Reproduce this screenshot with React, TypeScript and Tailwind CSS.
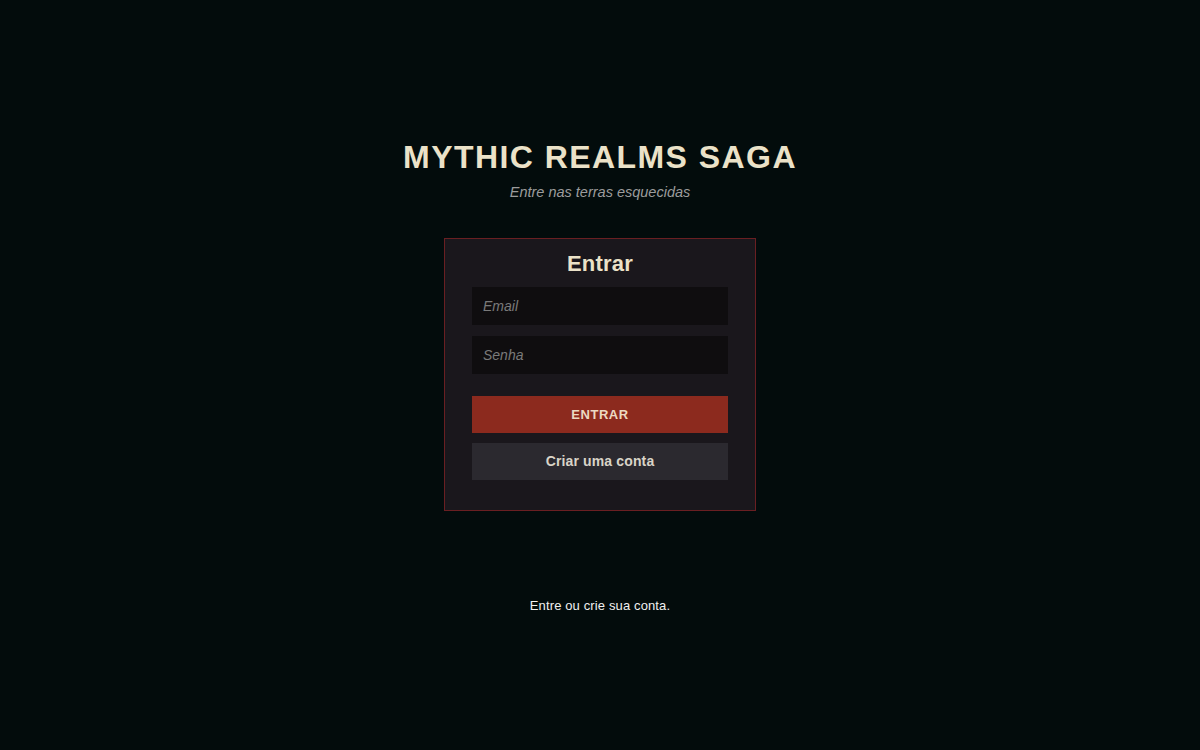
export default function App() {
  return (
    <main
      className="flex min-h-screen flex-col items-center bg-[#030c0c] pt-[136px]"
      style={{ fontFamily: '"Liberation Sans", Arial, sans-serif' }}
    >
      <h1 className="text-[32px] font-bold leading-[42px] tracking-[0.045em] text-[#ebe2c8]">
        MYTHIC REALMS SAGA
      </h1>
      <p className="mt-[4px] text-[14.5px] italic leading-[20px] text-[#9c9c9c]">
        Entre nas terras esquecidas
      </p>

      <section className="mt-[36px] w-[312px] border border-[#6a1f22] bg-[#1a171c] px-[27px] pb-[30px] pt-[11px]">
        <h2 className="text-center text-[22px] font-bold leading-[28px] tracking-[0.01em] text-[#ebe2c8]">
          Entrar
        </h2>
        <form className="mt-[9px] flex flex-col" onSubmit={(e) => e.preventDefault()}>
          <input
            type="email"
            placeholder="Email"
            className="h-[38px] w-full bg-[#0f0d0f] px-[11px] text-[14px] italic text-[#ddd] placeholder:text-[#7a7a7a] outline-none"
          />
          <input
            type="password"
            placeholder="Senha"
            className="mt-[11px] h-[38px] w-full bg-[#0f0d0f] px-[11px] text-[14px] italic text-[#ddd] placeholder:text-[#7a7a7a] outline-none"
          />
          <button
            type="submit"
            className="mt-[22px] h-[37px] w-full bg-[#8c2a1e] text-[13px] font-bold tracking-[0.04em] text-[#ecd9c2]"
          >
            ENTRAR
          </button>
          <button
            type="button"
            className="mt-[10px] h-[37px] w-full bg-[#2b292f] text-[14px] font-bold tracking-[0.01em] text-[#d9d4c8]"
          >
            Criar uma conta
          </button>
        </form>
      </section>

      <p className="mt-[86px] text-[13px] leading-[18px] tracking-[0.01em] text-[#f0f0f0]">
        Entre ou crie sua conta.
      </p>
    </main>
  );
}
